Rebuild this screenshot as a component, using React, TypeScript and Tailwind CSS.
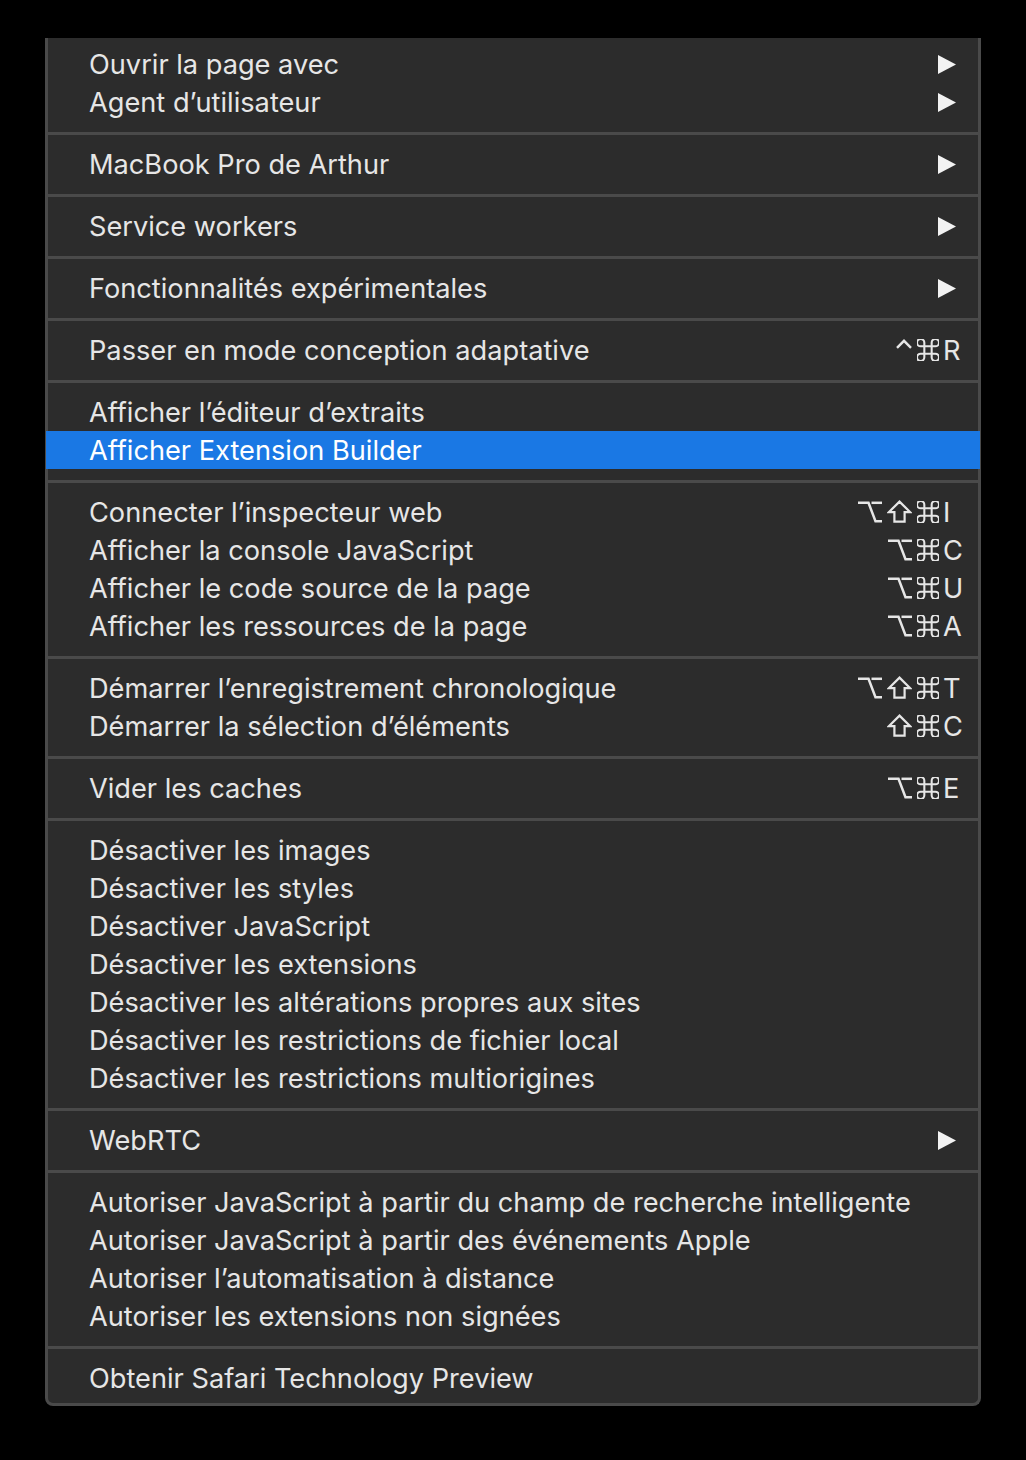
import React from "react";

type Item = { t: string; sub?: boolean; mods?: string[]; key?: string; hl?: boolean };

const groups: Item[][] = [
  [
    { t: "Ouvrir la page avec", sub: true },
    { t: "Agent d’utilisateur", sub: true },
  ],
  [{ t: "MacBook Pro de Arthur", sub: true }],
  [{ t: "Service workers", sub: true }],
  [{ t: "Fonctionnalités expérimentales", sub: true }],
  [{ t: "Passer en mode conception adaptative", mods: ["ctrl", "cmd"], key: "R" }],
  [
    { t: "Afficher l’éditeur d’extraits" },
    { t: "Afficher Extension Builder", hl: true },
  ],
  [
    { t: "Connecter l’inspecteur web", mods: ["opt", "shift", "cmd"], key: "I" },
    { t: "Afficher la console JavaScript", mods: ["opt", "cmd"], key: "C" },
    { t: "Afficher le code source de la page", mods: ["opt", "cmd"], key: "U" },
    { t: "Afficher les ressources de la page", mods: ["opt", "cmd"], key: "A" },
  ],
  [
    { t: "Démarrer l’enregistrement chronologique", mods: ["opt", "shift", "cmd"], key: "T" },
    { t: "Démarrer la sélection d’éléments", mods: ["shift", "cmd"], key: "C" },
  ],
  [{ t: "Vider les caches", mods: ["opt", "cmd"], key: "E" }],
  [
    { t: "Désactiver les images" },
    { t: "Désactiver les styles" },
    { t: "Désactiver JavaScript" },
    { t: "Désactiver les extensions" },
    { t: "Désactiver les altérations propres aux sites" },
    { t: "Désactiver les restrictions de fichier local" },
    { t: "Désactiver les restrictions multiorigines" },
  ],
  [{ t: "WebRTC", sub: true }],
  [
    { t: "Autoriser JavaScript à partir du champ de recherche intelligente" },
    { t: "Autoriser JavaScript à partir des événements Apple" },
    { t: "Autoriser l’automatisation à distance" },
    { t: "Autoriser les extensions non signées" },
  ],
  [{ t: "Obtenir Safari Technology Preview" }],
];

const C = "#e6e6e6";

function ModIcon({ kind }: { kind: string }) {
  if (kind === "cmd")
    return (
      <svg width="22" height="22" viewBox="3 3 18 18" fill="none" stroke={C} strokeWidth="1.7">
        <path d="M15 6v12a3 3 0 1 0 3-3H6a3 3 0 1 0 3 3V6a3 3 0 1 0-3 3h12a3 3 0 1 0-3-3" />
      </svg>
    );
  if (kind === "opt")
    return (
      <svg width="24" height="22" viewBox="0 0 24 22" fill="none" stroke={C} strokeWidth="2.5">
        <path d="M0 1.8H10.5L17.5 20.2H24" />
        <path d="M13.5 1.8H24" />
      </svg>
    );
  if (kind === "shift")
    return (
      <svg width="25" height="23" viewBox="0 0 25 23" fill="none" stroke={C} strokeWidth="2.2" strokeLinejoin="miter">
        <path d="M12.5 1.6L23.2 12.2H17.6V21.6H7.4V12.2H1.8Z" />
      </svg>
    );
  return (
    <svg width="16" height="22" viewBox="0 0 16 22" fill="none" stroke={C} strokeWidth="2.4">
      <path d="M1 8.8L8 1.8L15 8.8" />
    </svg>
  );
}

function Row({ item }: { item: Item }) {
  return (
    <div
      className={
        "flex h-[38px] items-center justify-between " +
        (item.hl ? "-mx-[2px] bg-[#1a78e4] pl-[43px] text-white" : "pl-[41px] text-[#e6e6e6]")
      }
    >
      <span className="whitespace-nowrap pt-[2px]">{item.t}</span>
      {item.sub && (
        <svg width="18" height="19" viewBox="0 0 18 19" className="mr-[22px]">
          <polygon points="0,0 18,9.5 0,19" fill="#f2f2f2" />
        </svg>
      )}
      {item.key && (
        <div className="flex items-center">
          <div className="flex items-center gap-[5px]" aria-label={item.mods!.join("+")}>
            {item.mods!.map((m, i) => (
              <ModIcon key={i} kind={m} />
            ))}
          </div>
          <span className="ml-[4px] inline-block w-[35px] pt-[2px]">{item.key}</span>
        </div>
      )}
    </div>
  );
}

export default function App() {
  return (
    <div className="min-h-[1460px] w-full bg-black pt-[38px] pl-[45px]">
      <div className="w-[936px] rounded-b-[8px] border-x-[3px] border-b-[3px] border-[#4a4a4a] bg-[#2c2c2c] pt-[7px] pb-[6px] font-['Inter',sans-serif] text-[27.2px] leading-none">
        {groups.map((g, gi) => (
          <div key={gi}>
            {gi > 0 && <div className="mt-[11px] mb-[10px] h-[3px] bg-[#4a4a4a]" />}
            {g.map((it, ii) => (
              <Row key={ii} item={it} />
            ))}
          </div>
        ))}
      </div>
    </div>
  );
}
